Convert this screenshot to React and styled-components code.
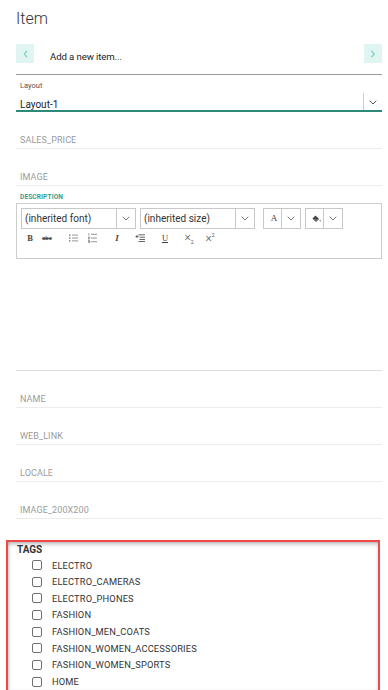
import React from "react";
import styled, { createGlobalStyle } from "styled-components";

const Global = createGlobalStyle`
  html, body { margin: 0; padding: 0; overflow: hidden; background: #fff; }
  body { font-family: Roboto, "Noto Sans", sans-serif; color: #333; }
  * { box-sizing: border-box; }
`;

const Page = styled.div`
  width: 388px;
  height: 690px;
  overflow: hidden;
  display: flex;
  flex-direction: column;
`;

const Form = styled.div`
  padding: 0 6px 0 16px;
  display: flex;
  flex-direction: column;
`;

const Title = styled.h1`
  margin: 0;
  padding-top: 9px;
  font-size: 16px;
  line-height: 19px;
  font-weight: 300;
  color: #333;
`;

const NavRow = styled.div`
  margin-top: 16px;
  display: flex;
  align-items: center;
  height: 19px;
  gap: 16px;
  box-sizing: content-box;
  padding-bottom: 11px;
  border-bottom: 1px solid #9a9a9a;
`;

const NavButton = styled.div`
  width: 18px;
  height: 19px;
  background: #e0f5f2;
  display: flex;
  align-items: center;
  justify-content: center;
  margin-left: ${(p) => (p.$right ? "auto" : "0")};
`;

const NavText = styled.span`
  font-size: 9.6px;
  color: #222;
  letter-spacing: -0.1px;
  padding-top: 6px;
`;

const LayoutField = styled.div`
  padding-top: 6px;
  border-bottom: 2px solid #2c8a7a;
  display: flex;
  flex-direction: column;
`;

const SmallLabel = styled.div`
  font-size: 7.5px;
  line-height: 10px;
  color: #555;
  padding-left: 4px;
`;

const SelectRow = styled.div`
  margin-top: 2px;
  height: 17px;
  display: flex;
  align-items: stretch;
`;

const SelectValue = styled.div`
  flex: 1;
  font-size: 10px;
  color: #222;
  padding: 5px 0 0 4px;
  line-height: 13px;
`;

const SelectArrow = styled.div`
  width: 19px;
  border-left: 1px solid #ccc;
  display: flex;
  align-items: center;
  justify-content: center;
  padding-top: 1px;
`;

const Field = styled.div`
  height: 37px;
  border-bottom: 1px solid #ececec;
  display: flex;
  align-items: flex-end;
  padding: 0 0 2px 4px;
`;

const FieldLabel = styled.span`
  font-size: 9px;
  line-height: 12px;
  color: #9b9b9b;
  letter-spacing: 0.1px;
`;

const DescLabel = styled.div`
  padding: 6px 0 0 4px;
  font-size: 6.6px;
  line-height: 10px;
  font-weight: 700;
  color: #3a9d8d;
  letter-spacing: 0.1px;
`;

const Toolbar = styled.div`
  margin-top: 1px;
  border: 1px solid #cdcdcd;
  padding: 4px 4px 0 4px;
  height: 56px;
  display: flex;
  flex-direction: column;
`;

const ToolRow = styled.div`
  display: flex;
  align-items: center;
`;

const Combo = styled.div`
  display: flex;
  height: 21px;
  border: 1px solid #c8c8c8;
  width: ${(p) => p.$w}px;
  margin-left: ${(p) => p.$ml || 0}px;
`;

const ComboText = styled.div`
  flex: 1;
  font-size: 10px;
  line-height: 19px;
  color: #333;
  padding-left: 3px;
  display: flex;
  align-items: center;
  justify-content: ${(p) => (p.$center ? "center" : "flex-start")};
`;

const ComboArrow = styled.div`
  width: ${(p) => p.$w || 18}px;
  border-left: 1px solid #c8c8c8;
  display: flex;
  align-items: center;
  justify-content: center;
`;

const SerifGlyph = styled.span`
  font-family: "Liberation Serif", "DejaVu Serif", serif;
  font-size: ${(p) => p.$size || 8}px;
  font-weight: ${(p) => (p.$bold ? 700 : 400)};
  font-style: ${(p) => (p.$italic ? "italic" : "normal")};
  text-decoration: ${(p) => p.$deco || "none"};
  color: #444;
  line-height: 1;
`;

const IconRow = styled.div`
  display: flex;
  align-items: center;
  height: 18px;
`;

const IconSlot = styled.div`
  width: 14px;
  margin-left: ${(p) => p.$ml}px;
  display: flex;
  align-items: center;
  justify-content: center;
  color: #444;
`;

const Script = styled.span`
  font-family: Roboto, sans-serif;
  font-size: 12px;
  font-weight: 300;
  color: #555;
  line-height: 1;
  sub, sup { font-size: 5px; font-weight: 400; }
`;

const Abc = styled.span`
  font-family: "Liberation Sans", sans-serif;
  font-size: 5.5px;
  font-weight: 700;
  color: #444;
  text-decoration: line-through;
`;

const EditorBody = styled.div`
  height: 112px;
  border-bottom: 1px solid #dcdcdc;
`;

const TagsBox = styled.div`
  margin: 21px 8px 0 6px;
  border: 2px solid #f04848;
  box-shadow: inset 0 3px 4px -1px rgba(0, 0, 0, 0.28), inset 2px 0 3px -1px rgba(0, 0, 0, 0.15);
  padding: 2px 0 0 9px;
  flex: 1;
`;

const TagsTitle = styled.div`
  font-size: 10px;
  line-height: 12px;
  font-weight: 700;
  color: #333;
`;

const TagList = styled.div`
  margin-top: 0.7px;
  display: flex;
  flex-direction: column;
`;

const TagRow = styled.label`
  height: 16.67px;
  display: flex;
  align-items: center;
  padding-left: 15px;
  gap: 10px;
`;

const Box = styled.span`
  width: 10px;
  height: 10px;
  border: 1px solid #707070;
  border-radius: 2px;
  background: #fff;
`;

const TagText = styled.span`
  font-size: 9.3px;
  color: #333;
  letter-spacing: 0.15px;
`;

const Chevron = ({ dir = "down", color = "#666", w = 8, h = 5, sw = 1 }) => {
  const paths = {
    down: "M1 1 L4 4 L7 1",
    left: "M4 1 L1.5 4 L4 7",
    right: "M1 1 L3.5 4 L1 7",
  };
  const vb = dir === "down" ? "0 0 8 5" : "0 0 5.5 8";
  return (
    <svg width={w} height={h} viewBox={vb} fill="none">
      <path d={paths[dir]} stroke={color} strokeWidth={sw} strokeLinecap="round" strokeLinejoin="round" />
    </svg>
  );
};

const BulletIcon = () => (
  <svg width="9" height="8" viewBox="0 0 9 8">
    <g fill="#666">
      <rect x="0" y="0.5" width="1.5" height="1.2" />
      <rect x="0" y="3.4" width="1.5" height="1.2" />
      <rect x="0" y="6.3" width="1.5" height="1.2" />
    </g>
    <g stroke="#888" strokeWidth="0.9">
      <path d="M3 1.1 H9 M3 4 H9 M3 6.9 H9" />
    </g>
  </svg>
);

const NumberIcon = () => (
  <svg width="9" height="10" viewBox="0 0 9 10">
    <g stroke="#666" strokeWidth="0.7">
      <path d="M0.8 0.3 V2.4 M0.2 4 H1.6 V5 H0.2 V6 H1.6 M0.2 7.5 H1.6 V9.6 H0.2 M0.2 8.5 H1.6" fill="none" />
    </g>
    <g stroke="#888" strokeWidth="0.9">
      <path d="M3 1.3 H9 M3 5 H9 M3 8.7 H9" />
    </g>
  </svg>
);

const IndentIcon = () => (
  <svg width="10" height="8" viewBox="0 0 10 8">
    <g stroke="#555" strokeWidth="0.9">
      <path d="M0.5 2.5 H3.5 M2 1 V4" />
      <path d="M3.5 0.8 H10 M4.5 3.2 H10 M4.5 5.5 H10 M3.5 7.5 H10" />
    </g>
  </svg>
);

const PaintIcon = () => (
  <svg width="9" height="8" viewBox="0 0 9 8">
    <path d="M3.5 0.5 L7 4 L4 7 L0.5 3.5 Z" fill="#444" />
    <path d="M1 4 L6.3 4.2 L4 6.6 Z" fill="#777" />
    <path d="M8 4.5 C8.8 5.6 8.9 6.2 8.2 6.6 C7.5 6.2 7.6 5.6 8 4.5 Z" fill="#444" />
  </svg>
);

const tags = [
  "ELECTRO",
  "ELECTRO_CAMERAS",
  "ELECTRO_PHONES",
  "FASHION",
  "FASHION_MEN_COATS",
  "FASHION_WOMEN_ACCESSORIES",
  "FASHION_WOMEN_SPORTS",
  "HOME",
];

export default function App() {
  return (
    <Page>
      <Global />
      <Form>
        <Title>Item</Title>
        <NavRow>
          <NavButton>
            <Chevron dir="left" color="#86d6ca" w={5} h={8} sw={1.6} />
          </NavButton>
          <NavText>Add a new item...</NavText>
          <NavButton $right>
            <Chevron dir="right" color="#86d6ca" w={5} h={8} sw={1.6} />
          </NavButton>
        </NavRow>

        <LayoutField>
          <SmallLabel>Layout</SmallLabel>
          <SelectRow>
            <SelectValue>Layout-1</SelectValue>
            <SelectArrow>
              <Chevron color="#444" w={8} h={5} sw={0.9} />
            </SelectArrow>
          </SelectRow>
        </LayoutField>

        <Field><FieldLabel>SALES_PRICE</FieldLabel></Field>
        <Field><FieldLabel>IMAGE</FieldLabel></Field>

        <DescLabel>DESCRIPTION</DescLabel>
        <Toolbar>
          <ToolRow>
            <Combo $w={115}>
              <ComboText>(inherited font)</ComboText>
              <ComboArrow $w={19}><Chevron color="#777" /></ComboArrow>
            </Combo>
            <Combo $w={115} $ml={4}>
              <ComboText>(inherited size)</ComboText>
              <ComboArrow $w={19}><Chevron color="#777" /></ComboArrow>
            </Combo>
            <Combo $w={38} $ml={8}>
              <ComboText $center><SerifGlyph $size={9}>A</SerifGlyph></ComboText>
              <ComboArrow $w={19}><Chevron color="#777" /></ComboArrow>
            </Combo>
            <Combo $w={38} $ml={4}>
              <ComboText $center><PaintIcon /></ComboText>
              <ComboArrow $w={19}><Chevron color="#777" /></ComboArrow>
            </Combo>
          </ToolRow>
          <IconRow>
            <IconSlot $ml={2}><SerifGlyph $size={8.5} $bold>B</SerifGlyph></IconSlot>
            <IconSlot $ml={3}><Abc>abc</Abc></IconSlot>
            <IconSlot $ml={12}><BulletIcon /></IconSlot>
            <IconSlot $ml={5}><NumberIcon /></IconSlot>
            <IconSlot $ml={11}><SerifGlyph $size={9} $bold $italic>I</SerifGlyph></IconSlot>
            <IconSlot $ml={9}><IndentIcon /></IconSlot>
            <IconSlot $ml={11}><SerifGlyph $size={8.5} $deco="underline">U</SerifGlyph></IconSlot>
            <IconSlot $ml={10}><Script>×<sub>2</sub></Script></IconSlot>
            <IconSlot $ml={7}><Script>×<sup>2</sup></Script></IconSlot>
          </IconRow>
        </Toolbar>
        <EditorBody />

        <Field><FieldLabel>NAME</FieldLabel></Field>
        <Field><FieldLabel>WEB_LINK</FieldLabel></Field>
        <Field><FieldLabel>LOCALE</FieldLabel></Field>
        <Field><FieldLabel>IMAGE_200X200</FieldLabel></Field>
      </Form>

      <TagsBox>
        <TagsTitle>TAGS</TagsTitle>
        <TagList>
          {tags.map((t) => (
            <TagRow key={t}>
              <Box />
              <TagText>{t}</TagText>
            </TagRow>
          ))}
        </TagList>
      </TagsBox>
    </Page>
  );
}
